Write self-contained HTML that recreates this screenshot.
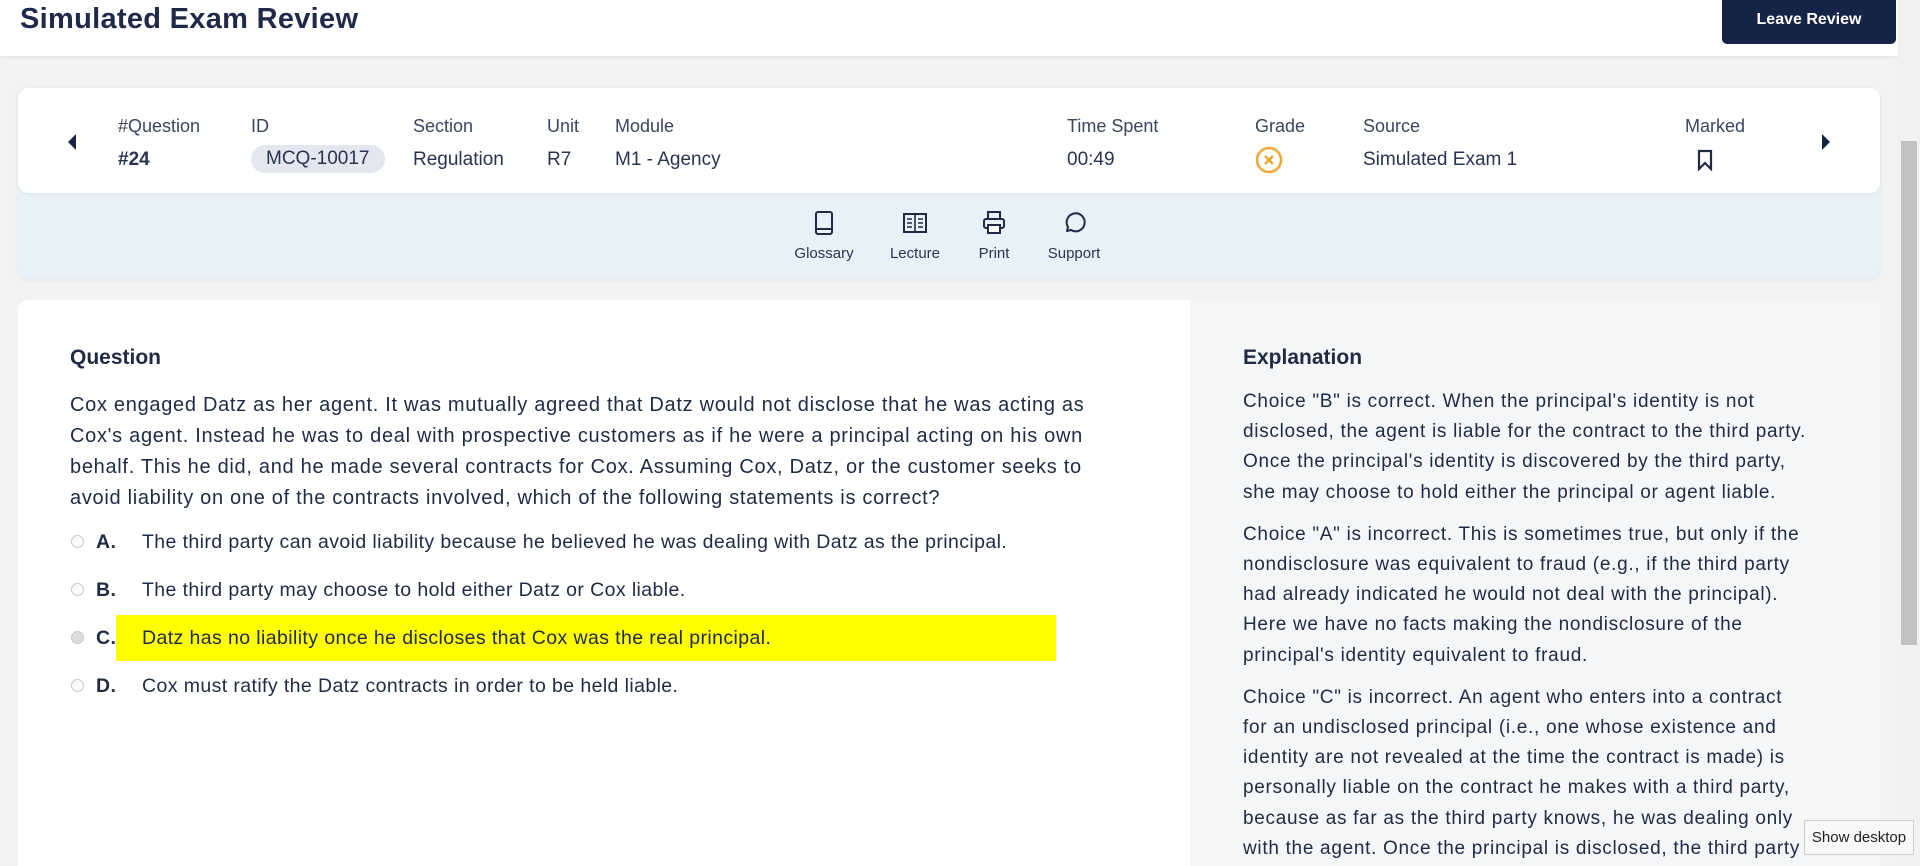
<!DOCTYPE html>
<html><head><meta charset="utf-8"><style>
*{box-sizing:border-box;margin:0;padding:0}
html,body{width:1920px;height:866px;overflow:hidden}
body{background:#f3f3f3;font-family:"Liberation Sans",sans-serif;color:#1f2a44;position:relative}
.hdr{position:absolute;left:0;top:0;width:1898px;height:56px;background:#fff;box-shadow:0 2px 4px rgba(0,0,0,.06)}
.hdr h1{position:absolute;left:20px;top:3px;font-size:29px;font-weight:bold;color:#1f2a4a;letter-spacing:0.3px}
.btn{position:absolute;left:1722px;top:0;width:174px;height:44px;background:#152347;color:#fff;border-radius:0 0 5px 5px;font-size:16px;font-weight:bold;text-align:center;line-height:40px}
.sb{position:absolute;left:1898px;top:0;width:22px;height:866px;background:#f1f1f1}
.sb div{position:absolute;left:3px;top:141px;width:16px;height:504px;background:#c1c1c1}
.card{position:absolute;left:18px;top:88px;width:1862px;height:191px;background:#e6f1f8;border-radius:10px;box-shadow:0 1px 4px rgba(0,0,0,.06)}
.top{position:absolute;left:0;top:0;width:1862px;height:105px;background:#fff;border-radius:10px;box-shadow:0 1px 3px rgba(0,0,0,.06)}
.c{position:absolute;top:28px;font-size:18px;color:#3a4560}
.c b{display:block;margin-top:12px;font-size:19px;font-weight:normal;color:#2a3450}
.pill{display:inline-block;background:#e4e7f0;border-radius:14px;padding:3px 15px;font-size:17px;color:#4a5470;margin-top:8px!important}
.tool{position:absolute;top:122px;width:80px;text-align:center;font-size:15px;color:#2a3450}
.tool svg{display:block;margin:0 auto 9px}
.main{position:absolute;left:18px;top:300px;width:1862px;height:566px;background:#fff;border-radius:10px 10px 0 0;overflow:hidden}
.exp{position:absolute;left:1172px;top:0;width:690px;height:566px;background:#f5f6f8}
h2{font-size:21px;font-weight:bold;color:#1f2a44}
.q{position:absolute;left:52px;top:46px;width:1020px}
.q p{font-size:20px;letter-spacing:0.7px;line-height:31px;margin-top:20px}
.opt{position:relative;height:48px;font-size:19.5px;line-height:48px;letter-spacing:0.4px}
.opt .r{position:absolute;left:1px;top:17px;width:13px;height:13px;border:1px solid #c8c8c8;border-radius:50%;background:#fafafa}
.opt .l{position:absolute;left:26px;font-weight:bold}
.opt .t{position:absolute;left:72px}
.hl{position:absolute;left:46px;top:1px;width:940px;height:46px;background:#ffff00}
.e{position:absolute;left:53px;top:46px;width:566px}
.e p{font-size:19px;letter-spacing:0.7px;line-height:30.2px;margin-top:12px}
.e h2{margin-bottom:17px}
.tip{position:absolute;left:1804px;top:820px;width:110px;height:35px;background:#f8f8f8;border:1px solid #ccc;font-size:15px;line-height:33px;text-align:center;color:#222}
</style></head><body>
<div class="hdr"><h1>Simulated Exam Review</h1><div class="btn">Leave Review</div></div>
<div class="sb"><div></div></div>
<div class="card">
<div class="top">
<svg style="position:absolute;left:49px;top:46px" width="10" height="16"><path d="M9 0L1 8L9 16Z" fill="#152347"/></svg>
<svg style="position:absolute;left:1803px;top:46px" width="10" height="16"><path d="M1 0L9 8L1 16Z" fill="#152347"/></svg>
<div class="c" style="left:100px">#Question<b style="font-weight:bold">#24</b></div>
<div class="c" style="left:233px">ID<b class="pill">MCQ-10017</b></div>
<div class="c" style="left:395px">Section<b>Regulation</b></div>
<div class="c" style="left:529px">Unit<b>R7</b></div>
<div class="c" style="left:597px">Module<b>M1 - Agency</b></div>
<div class="c" style="left:1049px">Time Spent<b>00:49</b></div>
<div class="c" style="left:1237px">Grade<b><svg width="28" height="28" style="margin-top:-3px"><circle cx="14" cy="14" r="12" fill="none" stroke="#f0a830" stroke-width="2.5"/><path d="M10 10L18 18M18 10L10 18" stroke="#f0a830" stroke-width="2.5"/></svg></b></div>
<div class="c" style="left:1345px">Source<b>Simulated Exam 1</b></div>
<div class="c" style="left:1667px">Marked<b><svg width="18" height="22" style="margin-left:11px"><path d="M3 2H15V20L9 14L3 20Z" fill="none" stroke="#1f2a44" stroke-width="2.2"/></svg></b></div>
</div>
<div class="tool" style="left:766px"><svg width="22" height="26"><rect x="3" y="2" width="16" height="22" rx="2" fill="none" stroke="#1f2a44" stroke-width="2"/><path d="M3 19H19" stroke="#1f2a44" stroke-width="2"/></svg>Glossary</div>
<div class="tool" style="left:857px"><svg width="26" height="26"><rect x="2" y="4" width="22" height="18" fill="none" stroke="#1f2a44" stroke-width="2"/><path d="M13 4V22M5 9H10M5 13H10M5 17H10M16 9H21M16 13H21M16 17H21" stroke="#1f2a44" stroke-width="1.6"/></svg>Lecture</div>
<div class="tool" style="left:936px"><svg width="26" height="26"><rect x="7" y="2" width="12" height="7" fill="none" stroke="#1f2a44" stroke-width="2"/><rect x="3" y="9" width="20" height="9" rx="2" fill="none" stroke="#1f2a44" stroke-width="2"/><rect x="7" y="15" width="12" height="8" fill="#fff" stroke="#1f2a44" stroke-width="2"/></svg>Print</div>
<div class="tool" style="left:1016px"><svg width="26" height="26"><path d="M6 21L7 17A9 9 0 1 1 10 20Z" fill="none" stroke="#1f2a44" stroke-width="2" stroke-linejoin="round"/></svg>Support</div>
</div>
<div class="main">
<div class="q"><h2>Question</h2>
<p>Cox engaged Datz as her agent. It was mutually agreed that Datz would not disclose that he was acting as Cox's agent. Instead he was to deal with prospective customers as if he were a principal acting on his own behalf. This he did, and he made several contracts for Cox. Assuming Cox, Datz, or the customer seeks to avoid liability on one of the contracts involved, which of the following statements is correct?</p>
<div style="margin-top:4px">
<div class="opt"><span class="r"></span><span class="l">A.</span><span class="t">The third party can avoid liability because he believed he was dealing with Datz as the principal.</span></div>
<div class="opt"><span class="r"></span><span class="l">B.</span><span class="t">The third party may choose to hold either Datz or Cox liable.</span></div>
<div class="opt"><div class="hl"></div><span class="r" style="background:#ddd"></span><span class="l">C.</span><span class="t">Datz has no liability once he discloses that Cox was the real principal.</span></div>
<div class="opt"><span class="r"></span><span class="l">D.</span><span class="t">Cox must ratify the Datz contracts in order to be held liable.</span></div>
</div></div>
<div class="exp"><div class="e"><h2>Explanation</h2>
<p>Choice "B" is correct. When the principal's identity is not disclosed, the agent is liable for the contract to the third party. Once the principal's identity is discovered by the third party, she may choose to hold either the principal or agent liable.</p>
<p>Choice "A" is incorrect. This is sometimes true, but only if the nondisclosure was equivalent to fraud (e.g., if the third party had already indicated he would not deal with the principal). Here we have no facts making the nondisclosure of the principal's identity equivalent to fraud.</p>
<p>Choice "C" is incorrect. An agent who enters into a contract for an undisclosed principal (i.e., one whose existence and identity are not revealed at the time the contract is made) is personally liable on the contract he makes with a third party, because as far as the third party knows, he was dealing only with the agent. Once the principal is disclosed, the third party may hold either liable.</p>
</div></div>
</div>
<div class="tip">Show desktop</div>
</body></html>
